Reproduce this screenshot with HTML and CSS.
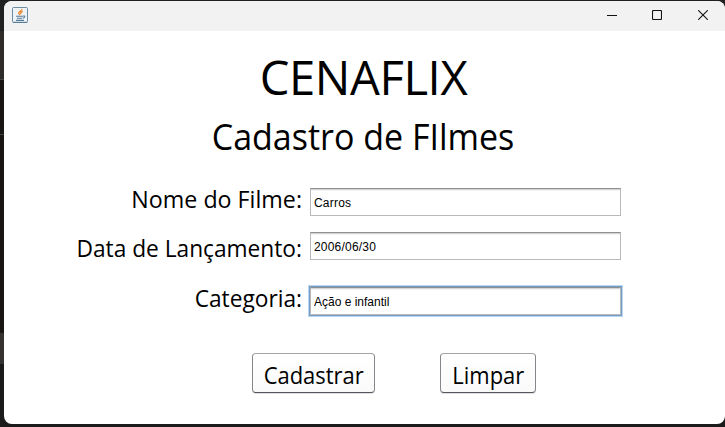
FILE: index.html
```html
<!DOCTYPE html>
<html lang="pt-BR">
<head>
<meta charset="utf-8">
<title>Cenaflix</title>
<link rel="stylesheet" href="styles.css">
</head>
<body>
<div class="window">
  <header class="titlebar">
    <svg class="app-icon" width="16" height="16" viewBox="0 0 16 16" fill="none">
      <rect x=".5" y=".5" width="15" height="15" rx="1" fill="#eef3f7" stroke="#6c8ca4"/>
      <path d="M1 15.3h14" stroke="#55788f"/>
      <path d="M9.8 2C10.2 4 6 4.8 6.7 6.4L8 8M10.8 4.4C8.5 5.2 8.3 6 9.2 7" stroke="#ec8428" stroke-width="1.3"/>
      <path d="M4 9.2h7M5 11.2h5M4 13.4h8M11 9c2.6-.5 2.2 1.8-.3 2.2" stroke="#587e9b" stroke-width="1.1"/>
    </svg>
    <div class="controls">
      <svg width="10" height="10" viewBox="0 0 10 10"><path d="M0 5.5h10"/></svg>
      <svg width="10" height="10" viewBox="0 0 10 10"><rect x=".5" y=".5" width="9" height="9" rx="1"/></svg>
      <svg width="10" height="10" viewBox="0 0 10 10"><path d="M.2.2l9.6 9.6M9.8.2L.2 9.8"/></svg>
    </div>
  </header>
  <main class="content">
    <h1 class="title">CENAFLIX</h1>
    <h2 class="subtitle">Cadastro de FIlmes</h2>
    <form class="form">
      <div class="row"><label class="label name" for="nome">Nome do Filme:</label><input class="field" id="nome" value="Carros"></div>
      <div class="row date-row"><label class="label date" for="data">Data de Lançamento:</label><input class="field" id="data" value="2006/06/30"></div>
      <div class="row category-row"><label class="label category" for="categoria">Categoria:</label><input class="field active" id="categoria" value="Ação e infantil"></div>
      <div class="actions">
        <button type="button" class="button save"><span>Cadastrar</span></button>
        <button type="button" class="button clear"><span>Limpar</span></button>
      </div>
    </form>
  </main>
</div>
</body>
</html>
```
FILE: styles.css
```css
* { box-sizing: border-box; }
body {
  margin: 0;
  padding: 1px 0 3px 4px;
  height: 427px;
  overflow: hidden;
  color: #000;
  font-family: "Open Sans", "Noto Sans", sans-serif;
  background: linear-gradient(#202020 0 31px, #2d2c2b 31px 79px, #444 79px 80px, #171614 80px 134px, #444 134px 135px, #171614 135px 333px, #343331 333px 364px, #1b1b1b 364px);
}
.window {
  height: 423px;
  background: #fff;
  border-radius: 8px;
  overflow: hidden;
}
.titlebar {
  height: 30px;
  padding: 0 17px 0 8px;
  display: flex;
  align-items: center;
  justify-content: space-between;
  background: #f2f2f2;
}
.app-icon { margin-top: -2px; }
.controls { display: flex; gap: 36px; margin-top: -2px; }
.controls svg { display: block; fill: none; stroke: #111; stroke-width: 1.1; }
.controls svg:first-child { margin-right: -1px; }
.title, .subtitle {
  margin: 0;
  font-weight: 400;
  text-align: center;
  white-space: nowrap;
}
.title { padding-top: 13px; font-size: 48px; line-height: 66px; letter-spacing: -.4px; transform: translateX(-1px) scaleX(.983); }
.subtitle { padding-top: 2px; font-size: 36px; line-height: 50px; transform: translateX(-1.5px) scaleX(.944); }
.form { padding-top: 26px; }
.row { display: grid; grid-template-columns: 298px 311px; column-gap: 8px; height: 28px; }
.date-row { margin-top: 16px; }
.category-row { margin-top: 27px; }
.label { font-size: 24px; line-height: 24px; text-align: right; white-space: nowrap; transform-origin: right top; }
.name { transform: translateY(-1px) scaleX(.968); }
.date { padding-top: 4px; transform: scaleX(.946); }
.category { transform: translateY(-1px) scaleX(.946); }
.field {
  width: 311px;
  height: 28px;
  padding: 3px 3px 1px;
  border: 1px solid #b9b9b9;
  border-top-color: #8e8e8e;
  border-radius: 0;
  outline: none;
  background: #fff;
  box-shadow: inset 0 1px #d5d5d5, inset 0 2px #f3f3f3;
  font: 12px "Liberation Sans", sans-serif;
  color: #000;
}
#data { letter-spacing: .2px; }
#nome { letter-spacing: .2px; }
.active { box-shadow: inset 0 1px #d5d5d5, inset 0 2px #f3f3f3, 0 0 0 1px #739dc9, 0 0 0 2px #bdd6ef; }
.actions { display: flex; gap: 65px; padding: 38px 0 0 248px; }
.button {
  height: 40px;
  padding: 0;
  border: 1px solid #85858b;
  border-top-color: #a4a4a7;
  border-bottom-color: #55555d;
  border-radius: 4px;
  background: linear-gradient(#fff, #fafafa);
  box-shadow: 0 1px #ddd;
  font: 24px/38px "Open Sans", "Noto Sans", sans-serif;
  color: #000;
}
.button span { display: inline-block; transform: translateY(2px) scaleX(.915); }
.save { width: 123px; }
.clear { width: 96px; }
```
